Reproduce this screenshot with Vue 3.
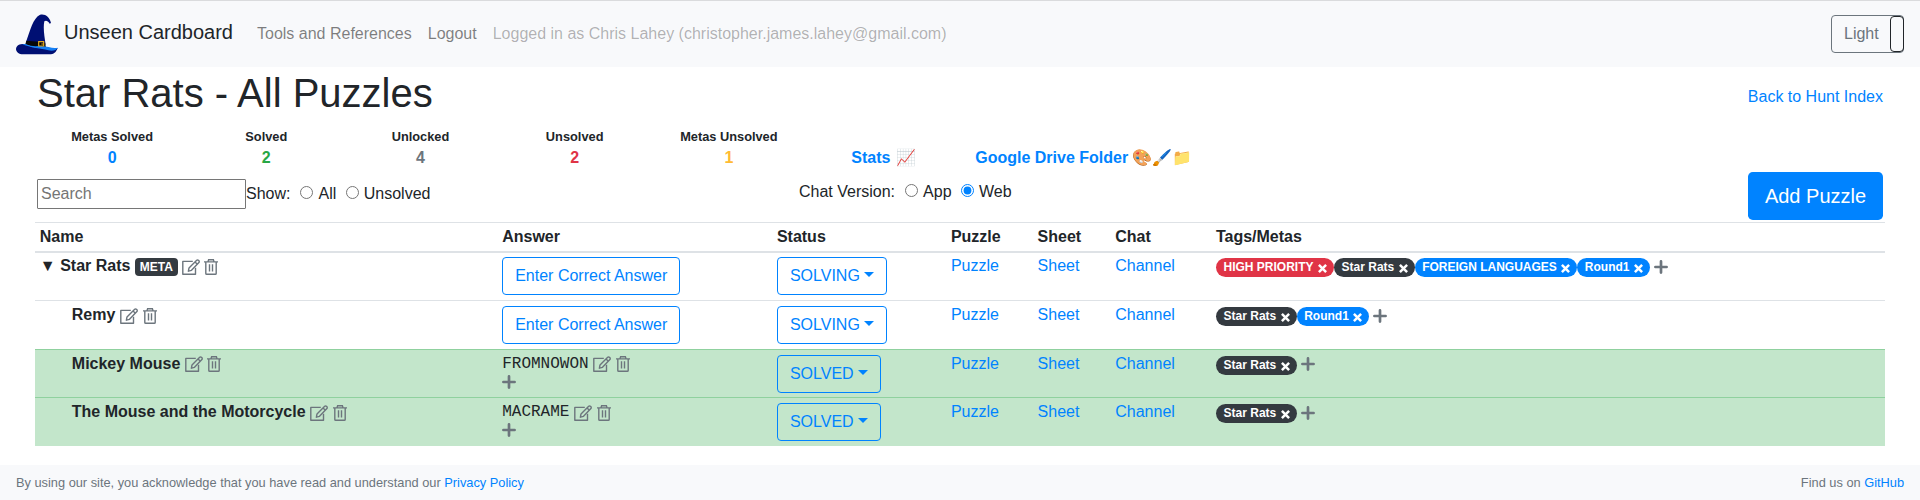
<script setup>
import { h } from 'vue'

const stats = [
  { label: 'Metas Solved', value: 0, tone: 'primary' },
  { label: 'Solved', value: 2, tone: 'success' },
  { label: 'Unlocked', value: 4, tone: 'muted' },
  { label: 'Unsolved', value: 2, tone: 'danger' },
  { label: 'Metas Unsolved', value: 1, tone: 'warning' },
]

const columns = ['Name', 'Answer', 'Status', 'Puzzle', 'Sheet', 'Chat', 'Tags/Metas']

const starRats = { text: 'Star Rats', tone: 'dark' }
const round1 = { text: 'Round1', tone: 'primary' }

const puzzles = [
  {
    name: 'Star Rats',
    meta: true,
    status: 'SOLVING',
    tags: [
      { text: 'HIGH PRIORITY', tone: 'danger' },
      starRats,
      { text: 'FOREIGN LANGUAGES', tone: 'primary' },
      round1,
    ],
  },
  { name: 'Remy', status: 'SOLVING', tags: [starRats, round1] },
  { name: 'Mickey Mouse', status: 'SOLVED', answer: 'FROMNOWON', tags: [starRats] },
  { name: 'The Mouse and the Motorcycle', status: 'SOLVED', answer: 'MACRAME', tags: [starRats] },
]

const stroke = { fill: 'none', stroke: 'currentColor', 'stroke-width': 1.4 }

const EditIcon = () =>
  h('svg', { width: 18, height: 16, viewBox: '0 0 18 16' }, [
    h('path', { ...stroke, 'stroke-linejoin': 'round', d: 'M10.8 2.4H.8v12.9h12.7V8.8' }),
    h('path', { ...stroke, 'stroke-linejoin': 'round', d: 'M6.4 12.2l.6-3.3 7.7-7.6a1.2 1.2 0 0 1 1.7 0l.5.5a1.2 1.2 0 0 1 0 1.7L9.5 11.3zM13.1 3l2.2 2.2' }),
  ])

const TrashIcon = () =>
  h('svg', { width: 14, height: 16, viewBox: '0 0 14 16' }, [
    h('path', { ...stroke, d: 'M0 2.9h14M4 2.6l.6-1.9h4.8l.6 1.9M1.8 3v11.4q0 .9.9.9h8.6q.9 0 .9-.9V3' }),
    h('path', { ...stroke, d: 'M5.5 5.2v7.4M8.5 5.2v7.4' }),
  ])

const PlusIcon = () =>
  h('svg', { width: 14, height: 14, viewBox: '0 0 14 14' }, [
    h('path', { fill: 'none', stroke: 'currentColor', 'stroke-width': 2.7, 'stroke-linecap': 'round', d: 'M7 1.4v11.2M1.4 7h11.2' }),
  ])

const CloseIcon = () =>
  h('svg', { width: 9, height: 9, viewBox: '0 0 9 9' }, [
    h('path', { fill: 'none', stroke: 'currentColor', 'stroke-width': 2.5, d: 'M.9 .9l7.2 7.2M8.1 .9L.9 8.1' }),
  ])
</script>

<template>
  <div class="page">
    <nav class="navbar">
      <svg class="logo" width="42" height="41" viewBox="48 40 126 123">
        <path fill="#000f73" d="M78 124C90 90 100 52 119 43C134 38 149 49 153 67L149 69C143 59 137 59 133 62C129 82 133 105 137 132Z" />
        <path fill="#080808" d="M79 120Q107 122 135 126L138 141Q105 144 76 131Z" />
        <path fill="#000f73" d="M48 145C49 132 62 129 76 130C98 142 126 145 173 142C168 155 162 161 148 161H69C57 161 48 154 48 145Z" />
        <path fill="#1580f5" d="M76 130C96 139 109 136 124 136C144 137 159 145 173 141C170 149 158 152 145 149C121 143 98 143 66 131Z" />
        <path fill="none" stroke="#e0a820" stroke-width="3.5" d="M116 123H131V136H116ZM124 130H131" />
      </svg>
      <span class="brand">Unseen Cardboard</span>
      <a class="nav-link tools">Tools and References</a>
      <a class="nav-link">Logout</a>
      <span class="nav-link disabled">Logged in as Chris Lahey (christopher.james.lahey@gmail.com)</span>
      <div class="theme-toggle"><span>Light</span><i class="handle"></i></div>
    </nav>

    <main class="content">
      <div class="title-row">
        <h1>Star Rats - All Puzzles</h1>
        <a class="back">Back to Hunt Index</a>
      </div>

      <div class="stats">
        <div v-for="s in stats" :key="s.label" class="stat">
          <div class="stat-label">{{ s.label }}</div>
          <div :class="['stat-value', 'text-' + s.tone]">{{ s.value }}</div>
        </div>
        <a class="stat-link">Stats <span class="emoji">📈</span></a>
        <a class="stat-link drive">Google Drive Folder <span>🎨🖌️📁</span></a>
      </div>

      <div class="filters">
        <input class="search" type="text" placeholder="Search" />
        <div class="radios show">
          <span>Show:</span>
          <label class="first"><input type="radio" name="show" />All</label>
          <label class="second"><input type="radio" name="show" />Unsolved</label>
        </div>
        <div class="radios chat">
          <span>Chat Version:</span>
          <label class="first"><input type="radio" name="chat" />App</label>
          <label class="second"><input type="radio" name="chat" checked />Web</label>
        </div>
        <button class="add">Add Puzzle</button>
      </div>

      <div class="table">
        <div class="row head">
          <div v-for="c in columns" :key="c">{{ c }}</div>
        </div>
        <div v-for="p in puzzles" :key="p.name" :class="['row', { solved: p.answer }]">
          <div :class="['name', { child: !p.meta }]">
            <span v-if="p.meta" class="caret">▼</span>
            <span>{{ p.name }}</span>
            <span v-if="p.meta" class="meta-badge">META</span>
            <EditIcon class="icon" /><TrashIcon class="icon" />
          </div>
          <div>
            <button v-if="!p.answer" class="btn">Enter Correct Answer</button>
            <template v-else>
              <div class="answer">
                <span>{{ p.answer }}</span>
                <EditIcon class="icon" /><TrashIcon class="icon" />
              </div>
              <PlusIcon class="plus below" />
            </template>
          </div>
          <div><button class="btn dropdown">{{ p.status }}</button></div>
          <div><a>Puzzle</a></div>
          <div><a>Sheet</a></div>
          <div><a>Channel</a></div>
          <div class="tags">
            <span v-for="t in p.tags" :key="t.text" :class="['pill', 'bg-' + t.tone]">{{ t.text }}<CloseIcon class="close" /></span>
            <PlusIcon class="plus" />
          </div>
        </div>
      </div>
    </main>

    <footer class="footer">
      <span>By using our site, you acknowledge that you have read and understand our <a>Privacy Policy</a></span>
      <span>Find us on <a>GitHub</a></span>
    </footer>
  </div>
</template>

<style>
body {
  margin: 0;
  background: #fff;
}
</style>

<style scoped>
.page {
  width: 1920px;
  height: 500px;
  box-sizing: border-box;
  display: flex;
  flex-direction: column;
  overflow: hidden;
  font: 16px/18px "Liberation Sans", Arial, "Noto Color Emoji", sans-serif;
  color: #212529;
}
.page * {
  box-sizing: border-box;
}
a {
  color: #0083ff;
}
button,
input {
  font-family: inherit;
}
.navbar {
  height: 67px;
  flex: none;
  display: flex;
  align-items: center;
  padding: 0 16px;
  border-top: 1px solid #dadbdd;
  background: #f8f9fb;
  line-height: 24px;
}
.logo {
  margin-right: 6px;
  flex: none;
}
.brand {
  width: 168px;
  font-size: 20px;
  line-height: 30px;
  margin-top: -4px;
  white-space: nowrap;
}
.nav-link {
  margin-left: 16px;
  color: rgba(0, 0, 0, 0.5);
}
.nav-link.tools {
  margin-left: 25px;
}
.nav-link.disabled {
  color: rgba(0, 0, 0, 0.3);
}
.theme-toggle {
  margin-left: auto;
  width: 73px;
  height: 38px;
  display: flex;
  justify-content: space-between;
  border: 1px solid #6c757d;
  border-radius: 4px;
  color: #6c757d;
  line-height: 36px;
  padding-left: 12px;
}
.handle {
  width: 14px;
  margin-right: -1px;
  border: 1px solid #212529;
  border-radius: 4px;
}
.content {
  flex: none;
  height: 398px;
  padding: 0 35px;
}
.title-row {
  height: 63px;
  display: flex;
  justify-content: space-between;
  padding: 2px 2px 0;
}
h1 {
  margin: 0;
  font-size: 40px;
  font-weight: 400;
  line-height: 48px;
}
.back {
  padding-top: 19px;
}
.stats {
  display: flex;
  height: 42px;
  font-weight: 700;
  text-align: center;
}
.stat,
.stat-link {
  width: 154.2px;
}
.stat-label {
  font-size: 12.8px;
  line-height: 13px;
  height: 19px;
}
.stat-link {
  padding-top: 19px;
  white-space: nowrap;
}
.stat-link.drive {
  width: 247.4px;
}
.emoji {
  margin: 0 -1.3px 0 1.3px;
}
.text-primary { color: #0083ff; }
.text-success { color: #28a745; }
.text-muted { color: #6c757d; }
.text-danger { color: #e03446; }
.text-warning { color: #ffbb33; }
.filters {
  height: 50px;
  display: flex;
  align-items: flex-start;
  padding: 0 2px;
}
.search {
  width: 209px;
  height: 30px;
  margin-top: 7px;
  padding: 0 3px;
  font-size: 16px;
  border: 1px solid #767676;
  border-radius: 1px;
  background: #fff;
}
.search::placeholder {
  color: #757575;
}
.radios {
  display: flex;
  white-space: nowrap;
}
.radios label {
  display: flex;
}
.radios input {
  width: 13px;
  height: 13px;
  margin: 1px 5px 0 0;
  accent-color: #0083ff;
}
.show {
  width: 553px;
  padding-top: 13px;
}
.radios .first { margin-left: 10px; }
.radios .second { margin-left: 9.5px; }
.chat {
  padding-top: 11px;
}
.add {
  margin-left: auto;
  width: 135px;
  height: 48px;
  padding: 0;
  border: 0;
  border-radius: 4.8px;
  background: #0083ff;
  color: #fff;
  font-size: 20px;
}
.row {
  display: grid;
  grid-template-columns: 462.4px 274.7px 174px 86.7px 77.7px 100.7px 1fr;
  height: 48px;
  padding: 5px 0 0 4.8px;
  border-top: 1px solid #dee2e6;
}
.row.head {
  height: 31px;
  border-bottom: 2px solid #dee2e6;
  font-weight: 700;
}
.row:nth-child(2) {
  height: 47px;
  padding-top: 4px;
  border-top: 0;
}
.row:nth-child(3),
.row:nth-child(5) {
  height: 49px;
}
.row.solved {
  background: #c3e6cb;
  border-color: #8fd19e;
}
.name,
.answer,
.tags {
  display: flex;
  align-items: flex-start;
}
.name {
  font-weight: 700;
  white-space: nowrap;
}
.name.child {
  padding-left: 32px;
}
.caret {
  width: 20.4px;
}
.icon {
  flex: none;
  margin: 2px 0 0 4.6px;
  color: #6c757d;
}
.meta-badge {
  margin: 1px 0 0 4.5px;
  padding: 3px 4.8px;
  border-radius: 4px;
  background: #343a40;
  color: #fff;
  font-size: 12px;
  line-height: 12px;
}
.meta-badge + .icon {
  margin-left: 4px;
}
.answer {
  font-family: "Liberation Mono", monospace;
}
.plus {
  display: block;
  flex: none;
  margin: 3px 0 0 4.2px;
  color: #6c757d;
}
.plus.below {
  margin: 2px 0 0;
}
.row:nth-child(4) .icon,
.row:nth-child(4) .tags .plus {
  transform: translateY(-1px);
}
.btn {
  height: 38px;
  padding: 0 12px;
  border: 1px solid #0083ff;
  border-radius: 4px;
  background: transparent;
  color: #0083ff;
  font-size: 16px;
  line-height: 24px;
  white-space: nowrap;
}
.dropdown::after {
  content: "";
  display: inline-block;
  margin-left: 4.3px;
  vertical-align: 4px;
  border: 5px solid transparent;
  border-top-color: currentColor;
  border-bottom: 0;
}
.pill {
  display: flex;
  height: 19px;
  margin-top: 1px;
  padding: 3px 6.9px 0 7.6px;
  border-radius: 10px;
  color: #fff;
  font-size: 12px;
  font-weight: 700;
  line-height: 12px;
  white-space: nowrap;
}
.close {
  margin: 2.5px 0 0 4.5px;
}
.bg-danger { background: #e03446; }
.bg-dark { background: #343a40; }
.bg-primary { background: #0083ff; }
.footer {
  flex: none;
  height: 35px;
  display: flex;
  justify-content: space-between;
  padding: 9px 16px 0;
  background: #f8f9fb;
  color: #6c757d;
  font-size: 12.8px;
}
</style>
